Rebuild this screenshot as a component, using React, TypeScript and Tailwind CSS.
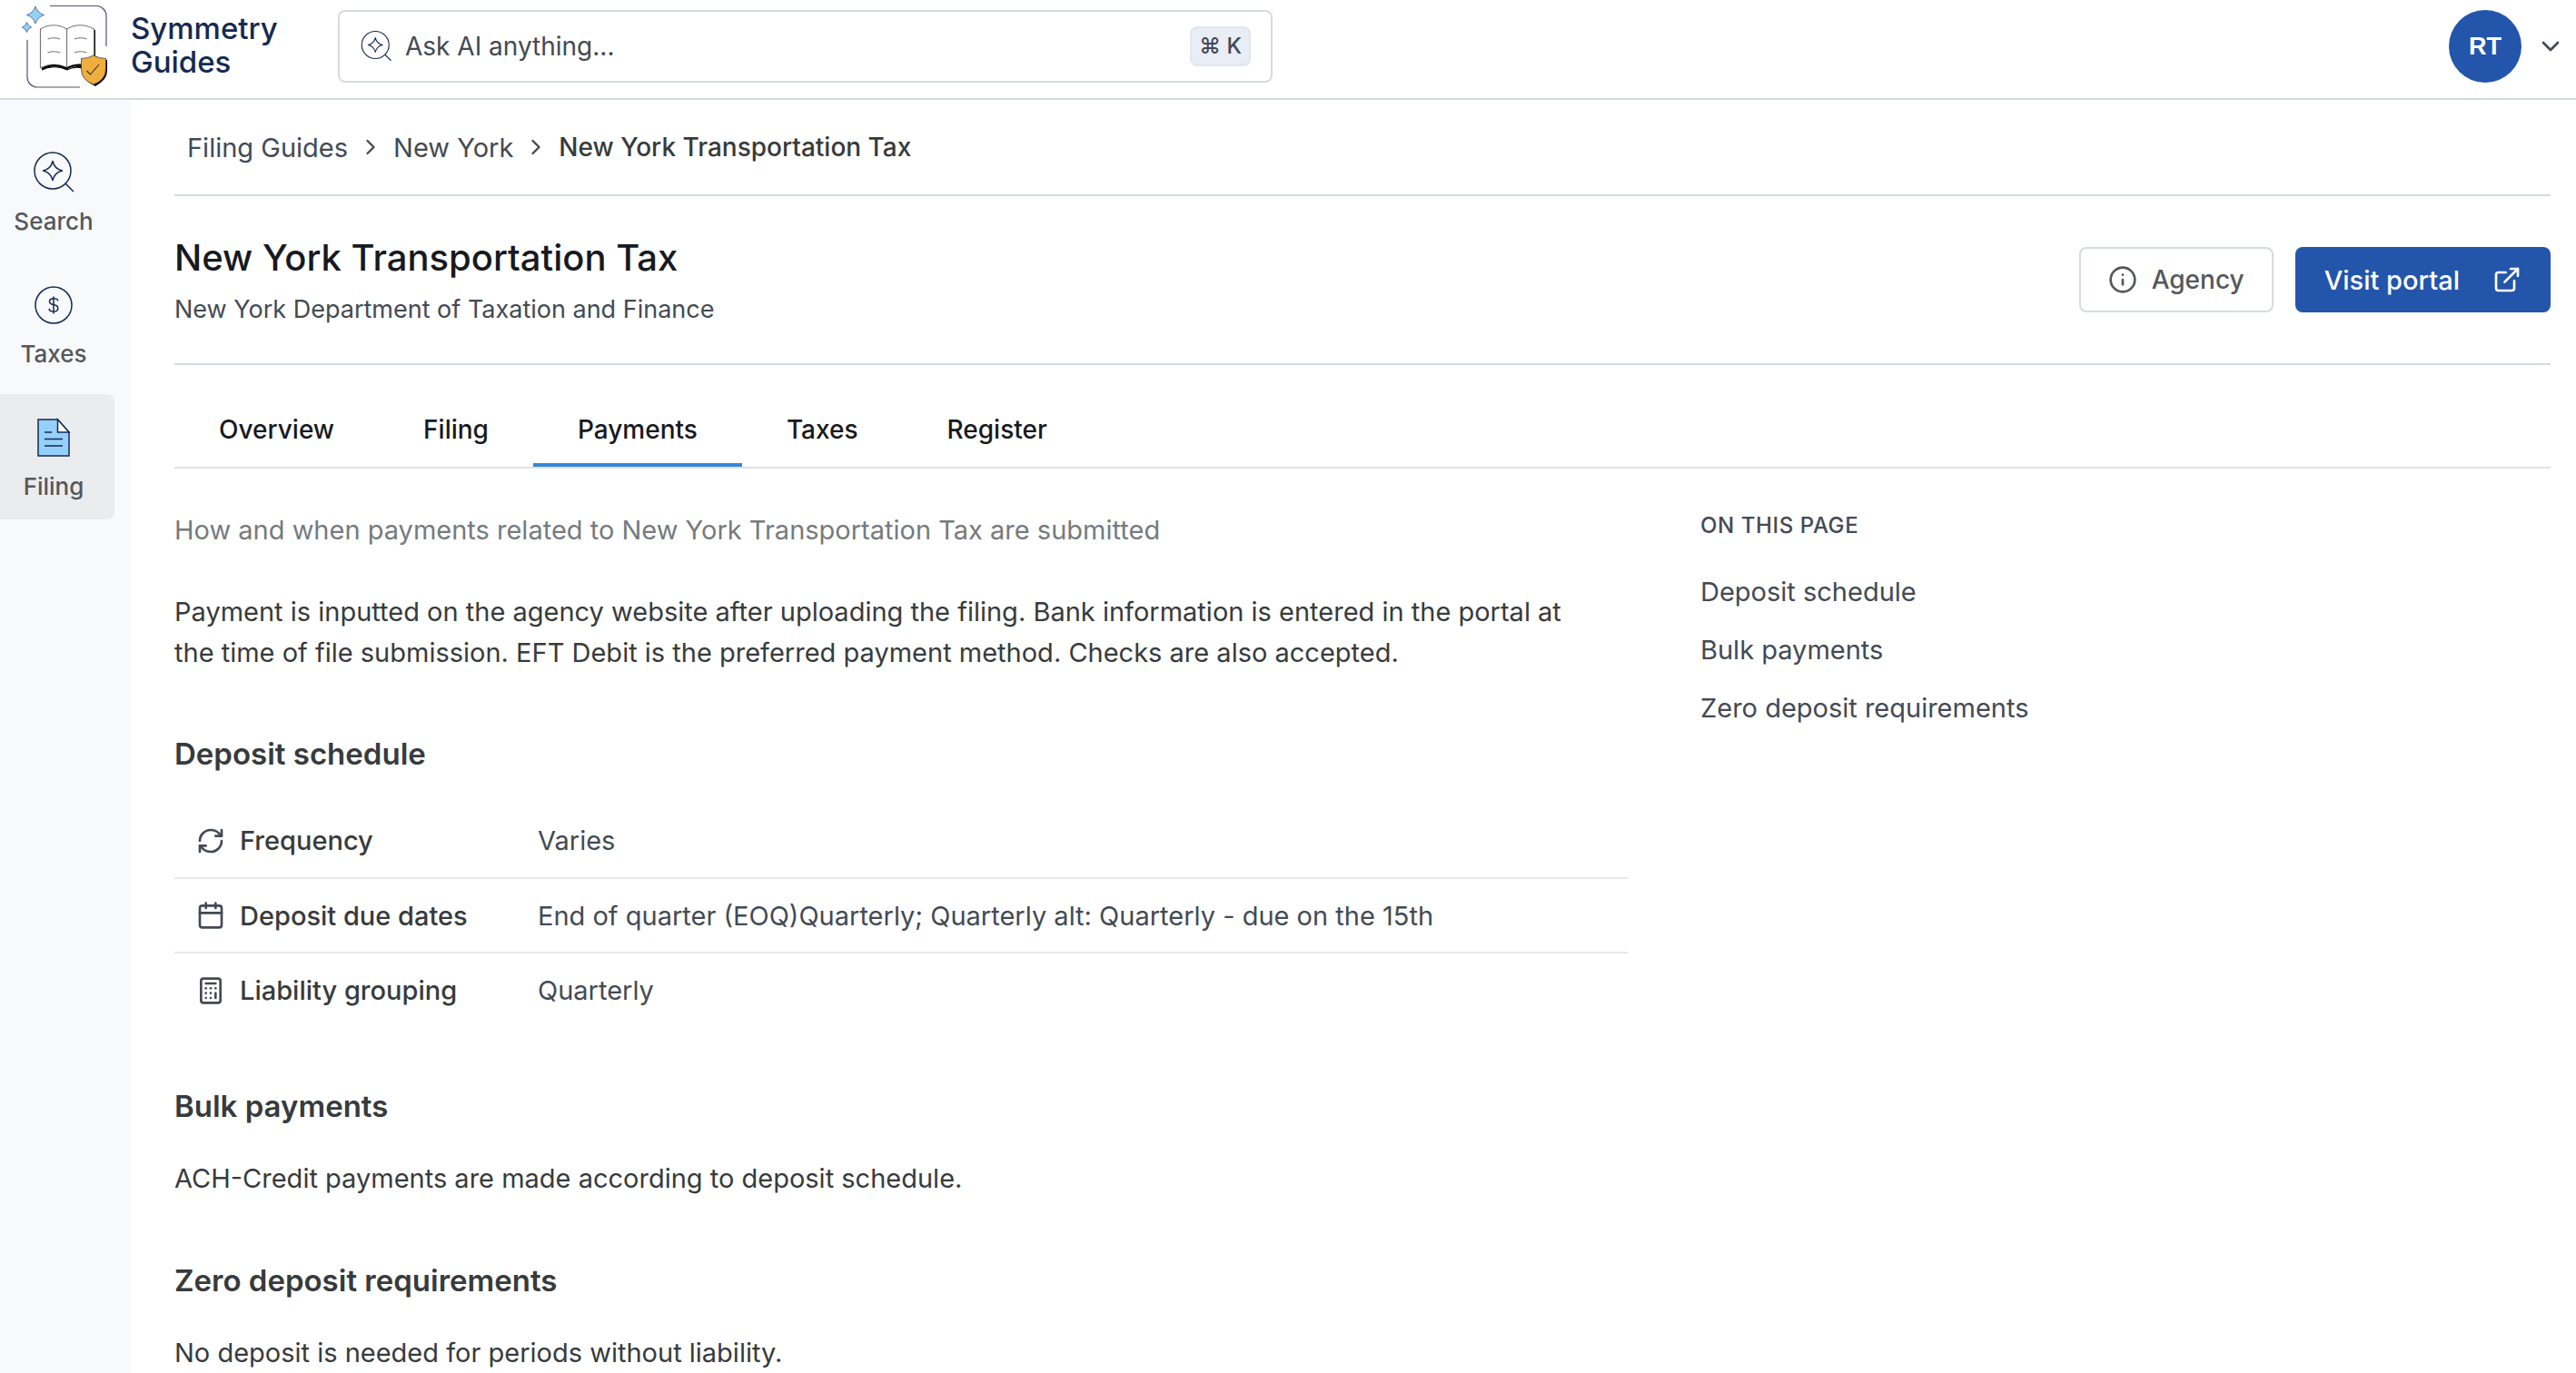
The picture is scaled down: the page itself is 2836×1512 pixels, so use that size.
import React, { useState } from 'react';
import { Calculator, Calendar, ChevronDown, ChevronRight, ExternalLink, Info, RefreshCw } from 'lucide-react';

interface DepositRow {
  icon: React.ReactNode;
  label: string;
  value: string;
}

const LogoMark = () => (
  <svg className="size-24 shrink-0" viewBox="0 0 96 96" fill="none" aria-hidden="true">
    <path d="M31 4.5H82a11 11 0 0 1 11 11V49" stroke="#475872" strokeWidth="1.2" />
    <path d="M6 42V83a11 11 0 0 0 11 11H64" stroke="#475872" strokeWidth="1.2" />
    <path
      d="M15 5Q17.500 12.500 24.500 14.500Q17.500 16.500 15 24Q12.500 16.500 5.500 14.500Q12.500 12.500 15 5Z"
      fill="#95d0fb"
      stroke="#3a5a7d"
      strokeWidth=".8"
    />
    <path
      d="M5.500 22.500Q6.800 27 10.700 28Q6.800 29 5.500 33.500Q4.200 29 .3 28Q4.200 27 5.500 22.500Z"
      fill="#95d0fb"
      stroke="#3a5a7d"
      strokeWidth=".8"
    />
    <path d="M22 74.500Q36 68 50 74.500Q64 68 78 72V31H81V74H68Q58 71 50 75.500Q36 69 22 75.500Z" fill="#000" />
    <path
      d="M20.500 30Q35 21.500 49.500 30Q64 21.500 79.500 30V72.500Q64 65.500 49.500 72.500Q35 65.500 20.500 72.500Z"
      fill="#fff"
      stroke="#777"
      strokeWidth="1.2"
    />
    <path d="M22 74Q36 66.500 49.500 73.500Q58 68.500 68 70" stroke="#000" strokeWidth="2.2" />
    <path d="M49.500 30V72.500" stroke="#777" strokeWidth="1.2" />
    <path
      d="M28.500 41Q35 38.500 42 41M58 41Q64.500 38.500 71.500 41M28.500 56Q35 53.500 42 56M58 56Q64.500 53.500 71.500 56"
      stroke="#777"
      strokeWidth="1.2"
    />
    <path d="M81 60Q87 64 94 64V76Q94 86 81 93Q70 88 67 80Z" fill="#000" />
    <path
      d="M79 59Q85 62.500 92.500 62.500V74Q92.500 86 79 91Q65.500 86 65.500 74V62.500Q73 62.500 79 59Z"
      fill="#f0ae3f"
      stroke="#3b3b3b"
      strokeWidth=".8"
    />
    <path d="M71.500 76L75.500 80L85 69" stroke="#333" strokeWidth="1.1" />
  </svg>
);

const SearchSparkIcon = ({ className }: { className: string }) => (
  <svg className={className} viewBox="0 0 48 48" fill="none" stroke="#152a52" strokeWidth="1.5" aria-hidden="true">
    <circle cx="23" cy="22" r="20" />
    <path d="M37 36L46 45" />
    <path d="M23 11.500Q25 20 33.500 22Q25 24 23 32.500Q21 24 12.500 22Q21 20 23 11.500Z" strokeLinejoin="round" />
  </svg>
);

const DollarIcon = () => (
  <svg className="size-12" viewBox="0 0 48 48" fill="none" stroke="#152a52" strokeWidth="1.5" aria-hidden="true">
    <circle cx="24" cy="24" r="20" />
    <path d="M24 14.500V33.500" />
    <path d="M28.500 19.500V18.500C28.500 17.500 26.500 16.700 24 16.700C21 16.700 19.500 18 19.500 20C19.500 22.300 21.200 23 24 23.500C27 24 28.800 24.900 28.800 27.400C28.800 30 27 31 24 31C21 31 19.300 30 19.300 28.500V27.700" />
  </svg>
);

const FileIcon = () => (
  <svg className="size-12" viewBox="0 0 48 48" fill="none" stroke="#152a52" strokeWidth="1.5" aria-hidden="true">
    <path d="M7 4H28.500L41 18V44H7Z" fill="#95d0fb" />
    <path d="M28.500 4V18H41Z" fill="#fff" />
    <path d="M14 18H22M14 25.500H34M14 33H34" />
  </svg>
);

const navItems = [
  { label: 'Search', icon: <SearchSparkIcon className="size-12" /> },
  { label: 'Taxes', icon: <DollarIcon /> },
  { label: 'Filing', icon: <FileIcon /> },
];

const tabs = ['Overview', 'Filing', 'Payments', 'Taxes', 'Register'];

const depositRows: DepositRow[] = [
  { icon: <RefreshCw size={32} />, label: 'Frequency', value: 'Varies' },
  {
    icon: <Calendar size={32} />,
    label: 'Deposit due dates',
    value: 'End of quarter (EOQ)Quarterly; Quarterly alt: Quarterly - due on the 15th',
  },
  { icon: <Calculator size={32} />, label: 'Liability grouping', value: 'Quarterly' },
];

const pageLinks = [
  { id: 'deposit-schedule', label: 'Deposit schedule' },
  { id: 'bulk-payments', label: 'Bulk payments' },
  { id: 'zero-deposit', label: 'Zero deposit requirements' },
];

const App: React.FC = () => {
  const [activeTab, setActiveTab] = useState('Payments');
  const [activeNav, setActiveNav] = useState('Filing');

  return (
    <div className="flex min-h-screen flex-col bg-white font-['Inter',sans-serif] text-[29px] leading-[45px] text-[#373b3c]">
      <header className="flex h-[110px] items-start border-b-2 border-[#d6dbdf]">
        <a href="#home" className="flex w-[372px] items-center gap-6 pt-0.5 pl-6">
          <LogoMark />
          <span className="w-min text-[33px] leading-[37px] font-medium text-[#152a52]">Symmetry Guides</span>
        </a>
        <div className="mt-[11px] flex h-20 w-[1029px] items-center rounded-lg border-2 border-[#d6dbdf] px-[22px]">
          <SearchSparkIcon className="size-9" />
          <input
            type="text"
            aria-label="Ask AI"
            placeholder="Ask AI anything..."
            className="ml-3.5 min-w-0 flex-1 text-[28px] outline-none placeholder:text-[#434a54]"
          />
          <kbd className="flex h-11 items-center rounded-lg border-2 border-[#e3e7ea] bg-[#e9edf5] px-2 font-['Inter',sans-serif] text-2xl font-medium text-[#434a54]">
            ⌘ K
          </kbd>
        </div>
        <button className="mt-[11px] mr-3 ml-auto flex items-center gap-4" aria-label="Account menu">
          <span className="flex size-20 items-center justify-center rounded-full bg-[#2355ab] font-['Liberation_Sans',sans-serif] text-[27px] font-bold text-white">
            RT
          </span>
          <ChevronDown size={32} className="text-[#434a54]" />
        </button>
      </header>

      <div className="flex flex-1">
        <nav className="flex w-36 shrink-0 flex-col gap-2 bg-[#f7f9fb] pt-8 pr-[18px]">
          {navItems.map((item) => (
            <button
              key={item.label}
              onClick={() => setActiveNav(item.label)}
              className={`flex h-[138px] flex-col items-center justify-center gap-3 rounded-r-lg pt-1.5 pr-2 text-[26px] leading-9 font-medium text-[#55585b] ${
                activeNav === item.label ? 'bg-[#ebeced]' : ''
              }`}
            >
              {item.icon}
              {item.label}
            </button>
          ))}
        </nav>

        <main className="min-w-0 flex-1 pr-7 pl-12">
          <nav className="flex h-[106px] items-center gap-[11px] border-b-2 border-[#d6dbdf] px-[14px] text-[#434a54]" aria-label="Breadcrumb">
            <a href="#guides">Filing Guides</a>
            <ChevronRight size={28} />
            <a href="#new-york">New York</a>
            <ChevronRight size={28} />
            <span className="text-[28px] font-medium text-[#373b3c]">New York Transportation Tax</span>
          </nav>

          <div className="flex h-[186px] items-center justify-between border-b-2 border-[#d6dbdf]">
            <div className="pt-1">
              <h1 className="text-[40px] leading-[58px] font-medium text-[#171a20]">New York Transportation Tax</h1>
              <p className="pt-1 text-[27px] leading-[48px] text-[#434a54]">New York Department of Taxation and Finance</p>
            </div>
            <div className="flex gap-6">
              <button className="flex h-[72px] items-center gap-4 rounded-lg border-2 border-[#d6dbdf] px-[30px] text-[28px] font-medium text-[#55585b]">
                <Info size={32} />
                Agency
              </button>
              <a href="#portal" className="flex h-[72px] items-center gap-9 rounded-lg bg-[#2355ab] px-8 font-medium text-white">
                Visit portal
                <ExternalLink size={32} />
              </a>
            </div>
          </div>

          <div className="flex border-b-2 border-[#dde1ee] pt-[34px]" role="tablist">
            {tabs.map((tab) => (
              <button
                key={tab}
                role="tab"
                aria-selected={activeTab === tab}
                onClick={() => setActiveTab(tab)}
                className={`h-[78px] border-b-4 px-[49px] text-[28px] font-medium text-[#171a20] ${
                  activeTab === tab ? 'border-[#3a85dc]' : 'border-transparent'
                }`}
              >
                {tab}
              </button>
            ))}
          </div>

          <div className="flex gap-20 pt-[45px]">
            <div className="w-[1600px] shrink">
              <p className="text-[#757b7d]">
                How and when payments related to New York Transportation Tax are submitted
              </p>
              <p className="mt-[45px] pr-8">
                Payment is inputted on the agency website after uploading the filing. Bank information is entered in
                the portal at the time of file submission. EFT Debit is the preferred payment method. Checks are also
                accepted.
              </p>

              <h2 id="deposit-schedule" className="mt-[67px] text-[33px] font-semibold">Deposit schedule</h2>
              <table className="mt-8 w-full text-left">
                <tbody>
                  {depositRows.map((row) => (
                    <tr key={row.label} className="h-[82px] border-b-2 border-[#e5e7e9] last:border-b-0">
                      <th scope="row" className="w-[400px] pl-6 font-medium">
                        <span className="flex items-center gap-4">
                          <span className="text-[#434a54]">{row.icon}</span>
                          {row.label}
                        </span>
                      </th>
                      <td className="text-[#434a54]">{row.value}</td>
                    </tr>
                  ))}
                </tbody>
              </table>

              <h2 id="bulk-payments" className="mt-[65px] text-[33px] font-semibold">Bulk payments</h2>
              <p className="mt-[34px]">ACH-Credit payments are made according to deposit schedule.</p>

              <h2 id="zero-deposit" className="mt-[68px] text-[33px] font-semibold">Zero deposit requirements</h2>
              <p className="mt-[34px]">No deposit is needed for periods without liability.</p>
            </div>

            <aside className="text-[#434a54]">
              <h3 className="text-2xl leading-9 font-medium tracking-wide">ON THIS PAGE</h3>
              <ul className="mt-8 flex flex-col gap-[19px]">
                {pageLinks.map((link) => (
                  <li key={link.id}>
                    <a href={`#${link.id}`}>{link.label}</a>
                  </li>
                ))}
              </ul>
            </aside>
          </div>
        </main>
      </div>
    </div>
  );
};

export default App;
